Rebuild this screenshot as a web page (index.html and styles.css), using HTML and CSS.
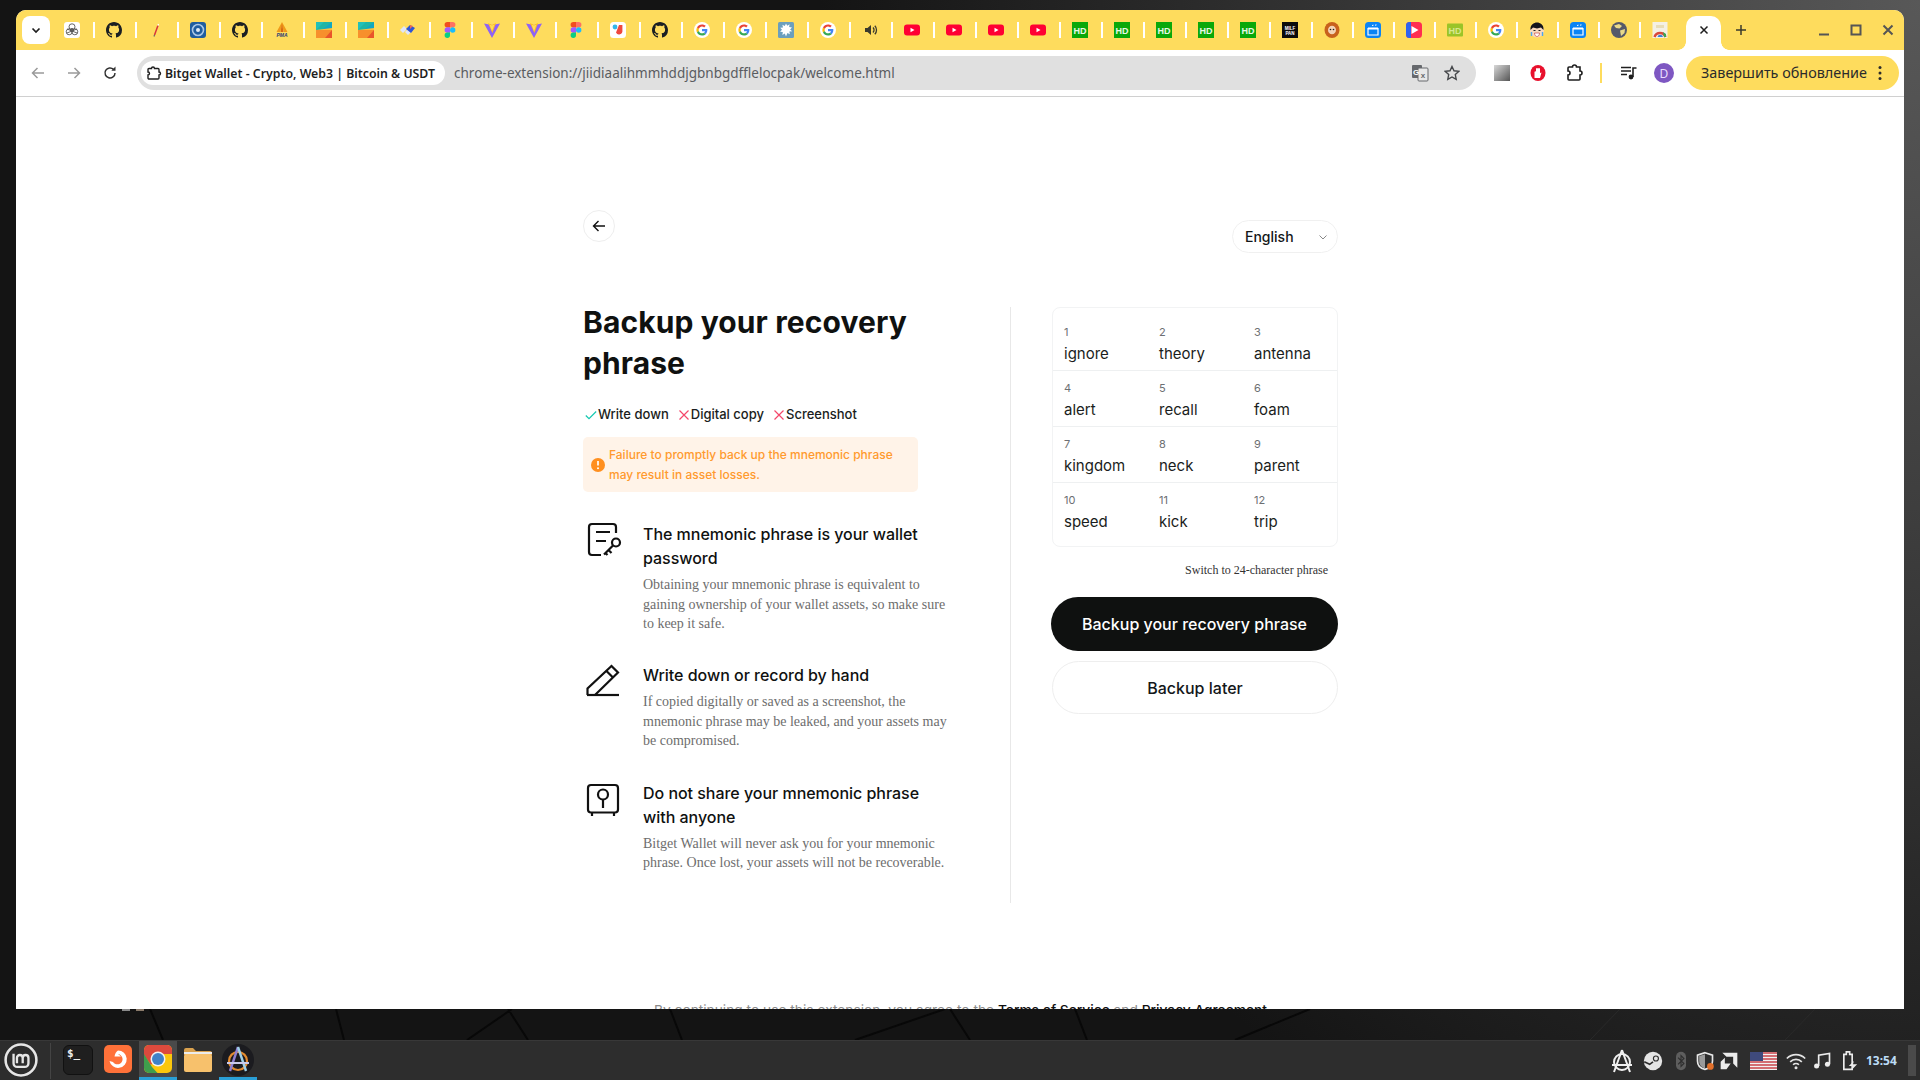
FILE: index.html
```html
<!DOCTYPE html>
<html lang="en">
<head>
<meta charset="utf-8">
<title>Bitget Wallet</title>
<link rel="stylesheet" href="styles.css">
</head>
<body>
<svg class="defs" xmlns="http://www.w3.org/2000/svg">
  <symbol id="gpt" viewBox="0 0 16 16"><rect width="16" height="16" rx="3" fill="#fff"/><g fill="none" stroke="#555" stroke-width=".9"><circle cx="8" cy="4.800" r="3"/><circle cx="5.200" cy="9.800" r="3"/><circle cx="10.800" cy="9.800" r="3"/><circle cx="8" cy="8" r="1.600"/><path d="M3 7l10 4M13 7L3 11"/></g></symbol>
  <symbol id="gh" viewBox="0 0 16 16"><path fill="#1b1f23" d="M8 0C3.58 0 0 3.58 0 8c0 3.54 2.29 6.53 5.47 7.59.4.07.55-.17.55-.38 0-.19-.01-.82-.01-1.49-2.01.37-2.53-.49-2.69-.94-.09-.23-.48-.94-.82-1.13-.28-.15-.68-.52-.01-.53.63-.01 1.08.58 1.23.82.72 1.21 1.87.87 2.33.66.07-.52.28-.87.51-1.07-1.78-.2-3.64-.89-3.64-3.95 0-.87.31-1.59.82-2.15-.08-.2-.36-1.02.08-2.12 0 0 .67-.21 2.2.82.64-.18 1.32-.27 2-.27.68 0 1.36.09 2 .27 1.53-1.04 2.2-.82 2.2-.82.44 1.1.16 1.92.08 2.12.51.56.82 1.27.82 2.15 0 3.07-1.87 3.75-3.65 3.95.29.25.54.73.54 1.48 0 1.07-.01 1.93-.01 2.2 0 .21.15.46.55.38A8.013 8.013 0 0016 8c0-4.42-3.58-8-8-8z"/></symbol>
  <symbol id="pen" viewBox="0 0 16 16"><path d="M10 3.500 6.500 13" stroke="#d8353a" stroke-width="1.500"/><path d="M10 3.500 10.500 2" stroke="#fff" stroke-width="1.300"/><path d="M6.500 13 6 14.500" stroke="#666" stroke-width="1.200"/></symbol>
  <symbol id="disc" viewBox="0 0 16 16"><rect width="16" height="16" rx="3" fill="#1f5d9f"/><circle cx="8" cy="8" r="5.500" fill="none" stroke="#a9c7e6" stroke-width="1.600"/><circle cx="8" cy="8" r="2" fill="#dfeaf5"/></symbol>
  <symbol id="pma" viewBox="0 0 16 16"><path d="M8 0 2.500 10h3.500L8 4l2 6h3.500z" fill="#f09a1a"/><path d="M8 1.500 6.500 10h3z" fill="#d96a12"/><text x="8" y="15" class="fav-pma">PMA</text></symbol>
  <symbol id="kite" viewBox="0 0 16 16"><rect width="16" height="8" fill="#1fb5a5"/><path d="M0 8h16v8H0z" fill="#f7902c"/><path d="M0 0h8L0 8z" fill="#22c0b8"/><path d="M16 0v8H6z" fill="#12a6c4"/><path d="M16 8v8h-7z" fill="#e9552a"/><path d="M0 8l16-2v2z" fill="#fbbf3a"/></symbol>
  <symbol id="rhomb" viewBox="0 0 16 16"><path d="M0 8l4-4 3 3-4 4z" fill="#dfe6fb"/><path d="M5 10l3-3 3 3-3 3z" fill="#dfe6fb"/><path d="M6 7l4-4 5 3-4 5z" fill="#2f55d4"/><path d="M10 3l3 1-3 3z" fill="#ef6a53"/></symbol>
  <symbol id="figma" viewBox="0 0 16 16"><g transform="translate(2.600 0)"><path d="M5.400 0H2.700a2.700 2.700 0 0 0 0 5.400h2.700z" fill="#f24e1e"/><path d="M5.400 0h2.700a2.700 2.700 0 0 1 0 5.400H5.400z" fill="#ff7262"/><path d="M5.400 5.300H2.700a2.700 2.700 0 0 0 0 5.400h2.700z" fill="#a259ff"/><circle cx="8.100" cy="8" r="2.700" fill="#1abcfe"/><path d="M2.700 10.600h2.700v2.700a2.700 2.700 0 1 1-2.700-2.700z" fill="#0acf83"/></g></symbol>
  <symbol id="vite" viewBox="0 0 16 16"><path d="M0 1.500 8 16l8-14.500-8 1.600z" fill="#8f63f5"/><path d="M4 1 8 3l4-2-3.600 10z" fill="#ffc21a"/><path d="M5.600 2.800 8 3.400l2.400-.6L8 9z" fill="#fedc5d"/></symbol>
  <symbol id="app" viewBox="0 0 16 16"><rect width="16" height="16" rx="3.500" fill="#fff"/><circle cx="5" cy="5" r="2.400" fill="#35b6e8"/><path d="M9 3h3.400v5.600a3.400 3.400 0 0 1-6.400 2z" fill="#f0483e"/></symbol>
  <symbol id="goog" viewBox="0 0 16 16"><circle cx="8" cy="8" r="8" fill="#fff"/><g transform="translate(2.400 2.400) scale(.233)"><path fill="#EA4335" d="M24 9.500c3.540 0 6.710 1.220 9.210 3.600l6.850-6.850C35.900 2.380 30.470 0 24 0 14.620 0 6.510 5.380 2.560 13.220l7.980 6.190C12.430 13.720 17.740 9.500 24 9.500z"/><path fill="#4285F4" d="M46.980 24.550c0-1.570-.15-3.090-.38-4.550H24v9.020h12.940c-.58 2.960-2.260 5.480-4.780 7.180l7.730 6c4.510-4.180 7.090-10.360 7.090-17.650z"/><path fill="#FBBC05" d="M10.530 28.590c-.48-1.450-.76-2.990-.76-4.590s.27-3.140.76-4.590l-7.980-6.190C.92 16.460 0 20.120 0 24c0 3.880.92 7.540 2.560 10.780l7.970-6.190z"/><path fill="#34A853" d="M24 48c6.480 0 11.930-2.130 16.030-5.810l-7.730-6c-2.150 1.450-4.920 2.300-8.300 2.300-6.260 0-11.570-4.220-13.470-9.910l-7.980 6.190C6.510 42.620 14.620 48 24 48z"/></g></symbol>
  <symbol id="splat" viewBox="0 0 16 16"><rect width="16" height="16" rx="1.500" fill="#6b9fbd"/><path d="M8 1.500l1.200 2.300 2.400-1.500-.5 2.800 2.900.3-1.900 2 2.100 1.800-2.900.4.600 2.700-2.500-1.200L8 14.500l-1.200-3-2.400 1.500.4-3-2.700-.3 1.900-2L2.200 5.800l2.800-.4-.6-2.700 2.400 1.300z" fill="#fff"/></symbol>
  <symbol id="speak" viewBox="0 0 16 16"><path d="M3 6h2.500L9 3v10L5.500 10H3z" fill="#3b3a2c"/><path d="M11 5.500a3.500 3.500 0 0 1 0 5M12.800 3.800a6 6 0 0 1 0 8.400" fill="none" stroke="#3b3a2c" stroke-width="1.300"/></symbol>
  <symbol id="yt" viewBox="0 0 16 16"><rect y="2.500" width="16" height="11" rx="3" fill="#ff0033"/><path d="M6.500 5.800 10.500 8l-4 2.200z" fill="#fff"/></symbol>
  <symbol id="hd" viewBox="0 0 16 16"><rect width="16" height="16" fill="#0aa80a"/><text x="8" y="11.800" class="fav-hd">HD</text></symbol>
  <symbol id="hdl" viewBox="0 0 16 16"><rect y="1.500" width="16" height="13" rx="1" fill="#9ac428"/><text x="8" y="11.800" class="fav-hdl">HD</text></symbol>
  <symbol id="milf" viewBox="0 0 16 16"><rect width="16" height="16" fill="#0c0c0c"/><text x="8" y="7.500" class="fav-milf">MILF</text><text x="8" y="12.500" class="fav-milf">PAN</text></symbol>
  <symbol id="kenny" viewBox="0 0 16 16"><ellipse cx="8" cy="8" rx="7.500" ry="8" fill="#c8611c"/><ellipse cx="8" cy="8" rx="4" ry="4.300" fill="#f3d3b5"/><circle cx="6.500" cy="7.500" r=".8" fill="#222"/><circle cx="9.500" cy="7.500" r=".8" fill="#222"/></symbol>
  <symbol id="clap" viewBox="0 0 16 16"><rect width="16" height="16" rx="3.500" fill="#0a84f5"/><path d="M3 6.500h10V13H3z" fill="none" stroke="#fff" stroke-width="1.200"/><path d="M3 6.500h10" stroke="#fff" stroke-width="1.800"/><path d="M7 3.500l1.500-.3M10 3.200l1.500-.3" stroke="#fff" stroke-width="1"/></symbol>
  <symbol id="play" viewBox="0 0 16 16"><rect width="16" height="16" rx="3.500" fill="#ff2d50"/><path d="M0 3.500A3.500 3.500 0 0 1 3.500 0H5v16H3.500A3.500 3.500 0 0 1 0 12.500z" fill="#2f63f0"/><path d="M5.500 4l7 4-7 4z" fill="#fff"/></symbol>
  <symbol id="boy" viewBox="0 0 16 16"><ellipse cx="8" cy="9" rx="7" ry="6.500" fill="#f8d9bd"/><path d="M1.500 8C1 2.500 5 .5 8 .5s7 2 6.500 7.500L12 5.500 8 6.500 4 5.500z" fill="#14141c"/><path d="M4.500 8.500h2M9.500 8.500h2" stroke="#222" stroke-width="1.100"/><path d="M5.500 11h5c0 2.500-1.500 3.500-2.500 3.500S5.500 13.500 5.500 11z" fill="#fff" stroke="#b33" stroke-width=".6"/><path d="M2.500 10v4M13.500 10v4" stroke="#4da6ee" stroke-width="1.400"/></symbol>
  <symbol id="globe" viewBox="0 0 16 16"><circle cx="8" cy="8" r="8" fill="#55596a"/><path d="M3 3.500 8 2l3 2-2.500 2.500L5 6zM9 8.500l5-1.500-.5 4L10 14z" fill="#e9d98a"/></symbol>
  <symbol id="chromeimg" viewBox="0 0 16 16"><rect x=".5" width="15" height="16" fill="#f4f0e6"/><path d="M2.500 15a5.800 5.800 0 0 1 11 0" fill="none" stroke="#d9483b" stroke-width="2.500"/><path d="M5.500 15a2.800 2.800 0 0 1 5.500 0" fill="#3b7fd9"/><path d="M4 3h8v3H4z" fill="#e8ddb8"/><path d="M11 10l3 2v3h-2z" fill="#3aa655"/></symbol>
  <symbol id="arrow" viewBox="0 0 16 16"><path d="M14 8H2.500M7.500 3 2.500 8l5 5" fill="none" stroke="currentColor" stroke-width="1.500"/></symbol>
</svg>

<div class="desktop">
  <div class="window">
    <div class="tabstrip">
      <div class="tabsearch"><svg viewBox="0 0 12 12"><path d="M2.500 4.500 6 8l3.500-3.500" fill="none" stroke="#1f1f1f" stroke-width="1.700"/></svg></div>
      <div class="tabs">
        <div class="tab"><svg class="fav"><use href="#gpt"/></svg></div>
        <div class="tab"><svg class="fav"><use href="#gh"/></svg></div>
        <div class="tab"><svg class="fav"><use href="#pen"/></svg></div>
        <div class="tab"><svg class="fav"><use href="#disc"/></svg></div>
        <div class="tab"><svg class="fav"><use href="#gh"/></svg></div>
        <div class="tab"><svg class="fav"><use href="#pma"/></svg></div>
        <div class="tab"><svg class="fav"><use href="#kite"/></svg></div>
        <div class="tab"><svg class="fav"><use href="#kite"/></svg></div>
        <div class="tab"><svg class="fav"><use href="#rhomb"/></svg></div>
        <div class="tab"><svg class="fav"><use href="#figma"/></svg></div>
        <div class="tab"><svg class="fav"><use href="#vite"/></svg></div>
        <div class="tab"><svg class="fav"><use href="#vite"/></svg></div>
        <div class="tab"><svg class="fav"><use href="#figma"/></svg></div>
        <div class="tab"><svg class="fav"><use href="#app"/></svg></div>
        <div class="tab"><svg class="fav"><use href="#gh"/></svg></div>
        <div class="tab"><svg class="fav"><use href="#goog"/></svg></div>
        <div class="tab"><svg class="fav"><use href="#goog"/></svg></div>
        <div class="tab"><svg class="fav"><use href="#splat"/></svg></div>
        <div class="tab"><svg class="fav"><use href="#goog"/></svg></div>
        <div class="tab"><svg class="fav"><use href="#speak"/></svg></div>
        <div class="tab"><svg class="fav"><use href="#yt"/></svg></div>
        <div class="tab"><svg class="fav"><use href="#yt"/></svg></div>
        <div class="tab"><svg class="fav"><use href="#yt"/></svg></div>
        <div class="tab"><svg class="fav"><use href="#yt"/></svg></div>
        <div class="tab"><svg class="fav"><use href="#hd"/></svg></div>
        <div class="tab"><svg class="fav"><use href="#hd"/></svg></div>
        <div class="tab"><svg class="fav"><use href="#hd"/></svg></div>
        <div class="tab"><svg class="fav"><use href="#hd"/></svg></div>
        <div class="tab"><svg class="fav"><use href="#hd"/></svg></div>
        <div class="tab"><svg class="fav"><use href="#milf"/></svg></div>
        <div class="tab tab-n"><svg class="fav"><use href="#kenny"/></svg></div>
        <div class="tab tab-n"><svg class="fav"><use href="#clap"/></svg></div>
        <div class="tab tab-n"><svg class="fav"><use href="#play"/></svg></div>
        <div class="tab tab-n"><svg class="fav"><use href="#hdl"/></svg></div>
        <div class="tab tab-n"><svg class="fav"><use href="#goog"/></svg></div>
        <div class="tab tab-n"><svg class="fav"><use href="#boy"/></svg></div>
        <div class="tab tab-n"><svg class="fav"><use href="#clap"/></svg></div>
        <div class="tab tab-n"><svg class="fav"><use href="#globe"/></svg></div>
        <div class="tab tab-n tab-last"><svg class="fav"><use href="#chromeimg"/></svg></div>
      </div>
      <div class="tab-active"><svg viewBox="0 0 12 12"><path d="M2.500 2.500l7 7M9.500 2.500l-7 7" stroke="#1f1f1f" stroke-width="1.500"/></svg></div>
      <div class="newtab"><svg viewBox="0 0 12 12"><path d="M6 1v10M1 6h10" stroke="#3a3a2c" stroke-width="1.500"/></svg></div>
      <div class="winbtns">
        <svg viewBox="0 0 12 12"><path d="M1 10.500h10" stroke="#555" stroke-width="2"/></svg>
        <svg viewBox="0 0 12 12"><rect x="1.500" y="1.500" width="9" height="9" fill="none" stroke="#555" stroke-width="2"/></svg>
        <svg viewBox="0 0 12 12"><path d="M1.500 1.500l9 9M10.500 1.500l-9 9" stroke="#555" stroke-width="2"/></svg>
      </div>
    </div>

    <div class="toolbar">
      <div class="navbtns">
        <svg class="nav-off"><use href="#arrow"/></svg>
        <svg class="nav-off nav-flip"><use href="#arrow"/></svg>
        <svg class="nav-on" viewBox="0 0 16 16"><path d="M13 8a5 5 0 1 1-1.500-3.600" fill="none" stroke="currentColor" stroke-width="1.500"/><path d="M13.500 1.500v4.200H9.300z" fill="currentColor"/></svg>
      </div>
      <div class="omnibox">
        <div class="chip">
          <svg class="chip-icon" viewBox="0 0 16 16"><path d="M3 3.500h2.500a1.500 1.500 0 0 1 3 0H12a1 1 0 0 1 1 1V7a1.500 1.500 0 0 1 0 3v3a1 1 0 0 1-1 1H3a1 1 0 0 1-1-1v-3a1.500 1.500 0 0 0 0-3V4.500a1 1 0 0 1 1-1z" fill="none" stroke="#1f1f1f" stroke-width="1.400"/></svg>
          <span class="chip-text">Bitget Wallet - Crypto, Web3 | Bitcoin &amp; USDT</span>
        </div>
        <span class="url">chrome-extension://jiidiaalihmmhddjgbnbgdfflelocpak/welcome.html</span>
        <svg class="omni-tr" viewBox="0 0 18 18"><rect x="1" y="1" width="10" height="13" rx="1" fill="#66686c"/><rect x="7" y="4" width="10" height="13" rx="1" fill="#e8e8e8" stroke="#66686c"/><text x="5" y="10.500" class="tr-g">G</text><text x="12" y="14" class="tr-x">x</text></svg>
        <svg class="omni-star" viewBox="0 0 16 16"><path d="M8 1.500l2 4.300 4.700.6-3.400 3.200.9 4.700L8 12l-4.200 2.300.9-4.700L1.300 6.400 6 5.800z" fill="none" stroke="#45474a" stroke-width="1.400"/></svg>
      </div>
      <div class="tools">
        <div class="ext-grey"></div>
        <svg class="ext-opera" viewBox="0 0 16 16"><ellipse cx="8" cy="8" rx="7.500" ry="8" fill="#e8112d"/><path d="M4.500 13V7a1 1 0 0 1 1.500-.5V4a1 1 0 0 1 2 0 1 1 0 0 1 2 0v4l1.500-.5L10 13z" fill="#fff"/></svg>
        <svg class="ext-puzzle" viewBox="0 0 18 18"><path d="M4 3h3.500a2 2 0 0 1 4 0H15v4a2 2 0 0 1 0 4v4a1 1 0 0 1-1 1H4a1 1 0 0 1-1-1v-4a2 2 0 0 0 0-4V4a1 1 0 0 1 1-1z" fill="none" stroke="#1f1f1f" stroke-width="1.600"/></svg>
        <div class="tool-sep"></div>
        <svg class="ext-media" viewBox="0 0 18 18"><path d="M1 3.500h10M1 7h10M1 10.500h6" stroke="#1f1f1f" stroke-width="1.500"/><circle cx="11" cy="13" r="2.400" fill="#1f1f1f"/><path d="M13 13V4h3.500" fill="none" stroke="#1f1f1f" stroke-width="1.600"/></svg>
        <div class="avatar">D</div>
        <div class="update"><span>Завершить обновление</span><svg viewBox="0 0 4 16"><circle cx="2" cy="2.500" r="1.500"/><circle cx="2" cy="8" r="1.500"/><circle cx="2" cy="13.500" r="1.500"/></svg></div>
      </div>
    </div>

    <main class="page">
      <div class="shell">
        <div class="topbar">
          <div class="back"><svg viewBox="0 0 16 16"><path d="M14 8H2.500M7.500 3 2.500 8l5 5" fill="none" stroke="#111" stroke-width="1.400"/></svg></div>
          <div class="lang"><span>English</span><svg viewBox="0 0 10 10"><path d="M1.500 3.500 5 7l3.500-3.500" fill="none" stroke="#888" stroke-width="1"/></svg></div>
        </div>
        <div class="columns">
          <section class="left">
            <h1 class="title">Backup your recovery phrase</h1>
            <div class="checks">
              <span class="check"><svg viewBox="0 0 12 12"><path d="M.8 6.500 4 9.700 11.200 2.500" fill="none" stroke="#14c8b0" stroke-width="1.200"/></svg>Write down</span>
              <span class="check"><svg viewBox="0 0 12 12"><path d="M1.500 1.500l9 9M10.500 1.500l-9 9" stroke="#f4476b" stroke-width="1.200"/></svg>Digital copy</span>
              <span class="check"><svg viewBox="0 0 12 12"><path d="M1.500 1.500l9 9M10.500 1.500l-9 9" stroke="#f4476b" stroke-width="1.200"/></svg>Screenshot</span>
            </div>
            <div class="notice">
              <svg viewBox="0 0 14 14"><circle cx="7" cy="7" r="7" fill="#ff8f1f"/><path d="M7 3v4.600" stroke="#fff" stroke-width="1.700"/><circle cx="7" cy="10.300" r="1" fill="#fff"/></svg>
              <p>Failure to promptly back up the mnemonic phrase may result in asset losses.</p>
            </div>
            <div class="items">
              <div class="item">
                <svg class="item-icon" viewBox="0 0 40 40"><g fill="none" stroke="#111" stroke-width="2.200"><path d="M33 11V5a3 3 0 0 0-3-3H9a3 3 0 0 0-3 3v25a3 3 0 0 0 3 3h9"/><path d="M13 10h14M13 19h10"/><circle cx="33" cy="20.500" r="4"/><path d="M30 23.500 21 32.500M25.500 28l3 3M22.500 31l2 2"/></g></svg>
                <div class="item-body">
                  <h3>The mnemonic phrase is your wallet password</h3>
                  <p>Obtaining your mnemonic phrase is equivalent to gaining ownership of your wallet assets, so make sure to keep it safe.</p>
                </div>
              </div>
              <div class="item">
                <svg class="item-icon" viewBox="0 0 40 40"><g fill="none" stroke="#111" stroke-width="2.200"><path d="M4.500 32v-6.500L28.500 3 35 9.500 12 32"/><path d="M23.500 8 30 14.500"/><path d="M4 32h32"/></g></svg>
                <div class="item-body">
                  <h3>Write down or record by hand</h3>
                  <p>If copied digitally or saved as a screenshot, the mnemonic phrase may be leaked, and your assets may be compromised.</p>
                </div>
              </div>
              <div class="item">
                <svg class="item-icon" viewBox="0 0 40 40"><g fill="none" stroke="#111" stroke-width="2.200"><rect x="5" y="4" width="30" height="27.500" rx="3"/><circle cx="20" cy="13.500" r="5"/><path d="M20 18.500V27M9 32v3M31 32v3"/></g></svg>
                <div class="item-body">
                  <h3>Do not share your mnemonic phrase with anyone</h3>
                  <p>Bitget Wallet will never ask you for your mnemonic phrase. Once lost, your assets will not be recoverable.</p>
                </div>
              </div>
            </div>
          </section>
          <section class="right">
            <div class="words">
              <div class="word"><small>1</small><span>ignore</span></div>
              <div class="word"><small>2</small><span>theory</span></div>
              <div class="word"><small>3</small><span>antenna</span></div>
              <div class="word"><small>4</small><span>alert</span></div>
              <div class="word"><small>5</small><span>recall</span></div>
              <div class="word"><small>6</small><span>foam</span></div>
              <div class="word"><small>7</small><span>kingdom</span></div>
              <div class="word"><small>8</small><span>neck</span></div>
              <div class="word"><small>9</small><span>parent</span></div>
              <div class="word word-end"><small>10</small><span>speed</span></div>
              <div class="word word-end"><small>11</small><span>kick</span></div>
              <div class="word word-end"><small>12</small><span>trip</span></div>
            </div>
            <div class="switch">Switch to 24-character phrase</div>
            <div class="btn btn-dark">Backup your recovery phrase</div>
            <div class="btn btn-light">Backup later</div>
          </section>
        </div>
        <p class="terms">By continuing to use this extension, you agree to the <b>Terms of Service</b> and <b>Privacy Agreement</b></p>
      </div>
    </main>
  </div>

  <svg class="gap" viewBox="0 0 1920 31">
    <g fill="none" stroke="#080808" stroke-width="2">
      <path d="M150 0l13 31M336 0l8 31M512 0l-45 31M508 0l20 31M670 0l12 31M945 0l-90 31M950 0l20 31M1075 0l12 31M1310 0l-75 31"/>
    </g>
    <g fill="none" stroke="#2a2a2a" stroke-width="1">
      <path d="M1620 0l-30 31M1815 0l-30 31"/>
    </g>
    <rect x="122" y="0" width="8" height="2" fill="#8a8a8a"/>
    <rect x="136" y="0" width="8" height="2" fill="#8a7a6a"/>
  </svg>

  <footer class="taskbar">
    <svg class="mint" viewBox="0 0 32 32"><circle cx="16" cy="16" r="14.500" fill="none" stroke="#e6e6e6" stroke-width="2.400"/><path d="M9 10v9a3.500 3.500 0 0 0 3.500 3.500h7A3.500 3.500 0 0 0 23 19v-5a2.700 2.700 0 0 0-5.400 0v5M17.600 14a2.700 2.700 0 0 0-5.400 0v5" fill="none" stroke="#e6e6e6" stroke-width="2.200"/></svg>
    <div class="bar-sep"></div>
    <div class="launch">
      <div class="app app-term"><span>$_</span></div>
      <div class="app"><svg viewBox="0 0 28 28"><rect width="28" height="28" rx="5" fill="#ff7139"/><path d="M14 5.500a8.700 8.700 0 1 1-8.500 10.500l3.500 1a5.200 5.200 0 1 0 5-8L17 11.500h-6.500c.5-3 1.800-5 3.500-6z" fill="#fff"/></svg></div>
      <div class="app app-on app-chrome"><svg viewBox="0 0 28 28"><rect width="28" height="28" rx="5" fill="#fbc70c"/><path d="M0 5a5 5 0 0 1 5-5h18a5 5 0 0 1 5 5v4H14L7 20 0 10z" fill="#dc4a3d"/><path d="M0 9l8 13 5.500 6H5a5 5 0 0 1-5-5z" fill="#3f9e4c"/><circle cx="14" cy="14" r="7.500" fill="#f2f2f2"/><circle cx="14" cy="14" r="6" fill="#3f82c8"/></svg></div>
      <div class="app"><svg viewBox="0 0 28 26"><path d="M0 4a2 2 0 0 1 2-2h7l3 3h14a2 2 0 0 1 2 2v2H0z" fill="#d9a14e"/><rect y="6" width="28" height="2" fill="#ececec"/><rect y="8" width="28" height="18" rx="2" fill="#f7c16c"/></svg></div>
      <div class="app app-on app-an"><svg viewBox="0 0 32 32"><circle cx="16" cy="16" r="16" fill="#1b1b1f"/><circle cx="16" cy="17" r="9" fill="none" stroke="#e38b2e" stroke-width="2.200"/><path d="M16 3 8 27" fill="none" stroke="#8f7fd0" stroke-width="2.400"/><path d="M16 3l8 24" fill="none" stroke="#9fd0e8" stroke-width="2.400"/><path d="M5 19h22" fill="none" stroke="#c9c9e8" stroke-width="2"/></svg></div>
    </div>
    <div class="tray">
      <svg class="tray-i tray-an" viewBox="0 0 24 24"><circle cx="12" cy="13" r="8" fill="none" stroke="#f0f0f0" stroke-width="2"/><path d="M12 1 4 23M12 1l8 22M2 16h20" fill="none" stroke="#f0f0f0" stroke-width="2"/></svg>
      <svg class="tray-i m9" viewBox="0 0 24 24"><circle cx="12" cy="12" r="11" fill="#e4e4e4"/><circle cx="15.500" cy="9" r="3" fill="none" stroke="#2d2d2d" stroke-width="1.400"/><path d="M1.500 13l6.500 3 4-3" fill="none" stroke="#2d2d2d" stroke-width="2"/></svg>
      <svg class="tray-i m8" viewBox="0 0 24 24"><rect x="6" y="1" width="12" height="22" rx="6" fill="#5e5e5e"/><path d="M8.500 8l7 7-3.500 3.500v-13L15.500 9l-7 7" fill="none" stroke="#2d2d2d" stroke-width="1.300"/></svg>
      <svg class="tray-i m4" viewBox="0 0 24 24"><path d="M12 2l9 3v7c0 6-4 9-9 10-5-1-9-4-9-10V5z" fill="none" stroke="#e8e8e8" stroke-width="2"/><path d="M12 4v17c-4-1-7-4-7-9V6z" fill="#9a9a9a"/><circle cx="18.500" cy="18.500" r="4" fill="#e2702a"/></svg>
      <svg class="tray-i m4" viewBox="0 0 24 24"><path d="M4 2h18v18l-5-5V7H9zM2 22v-9l5-5v7h7l-5 7z" fill="#ececec"/></svg>
      <svg class="flag" viewBox="0 0 27 18"><rect width="27" height="18" fill="#f2f2f2"/><path d="M0 1h27M0 4h27M0 7h27M0 10h27M0 13h27M0 16h27" stroke="#c9434a" stroke-width="1.400"/><rect width="13" height="9" fill="#3f4a7c"/></svg>
      <svg class="tray-i m9" viewBox="0 0 24 24"><path d="M1 9a15.500 15.500 0 0 1 22 0M5 13a10 10 0 0 1 14 0M8.500 16.500a5 5 0 0 1 7 0" fill="none" stroke="#e4e4e4" stroke-width="2"/><circle cx="12" cy="20" r="1.800" fill="#e4e4e4"/></svg>
      <svg class="tray-i m6" viewBox="0 0 24 24"><path d="M8 18V5l13-2v13" fill="none" stroke="#ececec" stroke-width="2"/><circle cx="5.500" cy="18" r="3" fill="#ececec"/><circle cx="18.500" cy="16" r="3" fill="#ececec"/></svg>
      <svg class="tray-i m6" viewBox="0 0 24 24"><path d="M10 1h4v3h3v18H7V4h3z" fill="none" stroke="#ececec" stroke-width="2"/><path d="M19 12l-6 6h5l-2 5 7-7h-5z" fill="#ececec"/></svg>
      <span class="clock">13:54</span>
      <div class="showdesk"></div>
    </div>
  </footer>
</div>
</body>
</html>
```

FILE: styles.css
```css
* { box-sizing: border-box; }
html, body { margin: 0; height: 100%; }
body { overflow: hidden; font-family: "Inter", "Liberation Sans", sans-serif; }
.defs { display: none; }
.fav-hd, .fav-hdl { font: 700 9px "Liberation Sans Narrow", "Liberation Sans", sans-serif; text-anchor: middle; }
.fav-hd { fill: #e8f8e8; }
.fav-hdl { fill: #d7e88e; }
.fav-milf { font: 700 4.500px "Liberation Sans", sans-serif; fill: #fff; text-anchor: middle; }
.fav-pma { font: italic 700 5px "Liberation Sans", sans-serif; fill: #2b3a78; text-anchor: middle; }
.tr-g { font: 700 8px "Liberation Sans", sans-serif; fill: #fff; text-anchor: middle; }
.tr-x { font: 700 8px "Liberation Sans", sans-serif; fill: #66686c; text-anchor: middle; }

.desktop {
  width: 1920px; height: 1080px; display: flex; flex-direction: column;
  background: radial-gradient(ellipse 1100px 1300px at 100% 0, #585858 0, #3a3a3a 45%, #282828 70%, #141414 100%), #111;
}
.window {
  margin: 10px 16px 0; height: 999px; display: flex; flex-direction: column;
  background: #fff; border-radius: 10px 10px 0 0; overflow: hidden; flex: none;
}
.gap { display: block; width: 1920px; height: 31px; flex: none; }

/* tab strip */
.tabstrip { height: 40px; background: #fedc5d; display: flex; flex: none; padding: 6px 0 0 6px; }
.tabsearch { width: 28px; height: 28px; background: #fff; border-radius: 8px; display: flex; align-items: center; justify-content: center; margin-right: 3px; flex: none; }
.tabsearch svg { width: 12px; height: 12px; }
.tabs { display: flex; height: 16px; margin-top: 6px; flex: none; }
.tab { width: 42px; height: 16px; padding-left: 11px; border-right: 2px solid #fff; flex: none; }
.tab-n { width: 41px; }
.tab-last { border-right: 0; }
.fav { width: 16px; height: 16px; display: block; }
.tab-active {
  width: 35px; height: 34px; background: #fff; border-radius: 10px 10px 0 0; margin-left: 4px;
  display: flex; align-items: center; justify-content: center; padding-bottom: 6px; flex: none; position: relative;
}
.tab-active::before, .tab-active::after { content: ""; position: absolute; bottom: 0; width: 8px; height: 8px; }
.tab-active::before { left: -8px; background: radial-gradient(circle at 0 0, #fedc5d 7.500px, #fff 8px); }
.tab-active::after { right: -8px; background: radial-gradient(circle at 100% 0, #fedc5d 7.500px, #fff 8px); }
.tab-active svg { width: 12px; height: 12px; }
.newtab { width: 40px; height: 28px; display: flex; align-items: center; justify-content: center; flex: none; }
.newtab svg { width: 12px; height: 12px; }
.winbtns { margin-left: auto; display: flex; gap: 20px; padding: 8px 10px 0 0; }
.winbtns svg { width: 12px; height: 12px; }

/* toolbar */
.toolbar { height: 47px; flex: none; display: flex; align-items: flex-start; padding-top: 6px; border-bottom: 1px solid #d0d0d0; background: #fff; }
.navbtns { width: 121px; height: 34px; display: flex; align-items: center; gap: 20px; padding-left: 14px; flex: none; }
.navbtns svg { width: 16px; height: 16px; flex: none; }
.nav-off { color: #9a9a9a; }
.nav-on { color: #333; }
.nav-flip { transform: scaleX(-1); }
.omnibox { width: 1339px; height: 34px; background: #e0e0e0; border-radius: 17px; display: flex; align-items: center; padding: 0 16px 0 4px; flex: none; }
.chip { height: 24px; width: 304px; background: #fff; border-radius: 12px; display: flex; align-items: center; padding-left: 5px; flex: none; }
.chip-icon { width: 16px; height: 16px; flex: none; margin-right: 3px; }
.chip-text { font: 600 12.300px "Noto Sans", sans-serif; color: #1f1f1f; white-space: nowrap; }
.url { font: 400 13.500px "Noto Sans", sans-serif; color: #5a5c60; margin-left: 9px; white-space: nowrap; }
.omni-tr { width: 18px; height: 18px; margin-left: auto; flex: none; }
.omni-star { width: 16px; height: 16px; margin-left: 15px; flex: none; }
.tools { display: flex; align-items: center; height: 34px; flex: 1; padding-left: 18px; }
.ext-grey { width: 16px; height: 16px; background: linear-gradient(135deg, #d8d8d8, #555); flex: none; }
.ext-opera { width: 16px; height: 16px; margin-left: 20px; flex: none; }
.ext-puzzle { width: 18px; height: 18px; margin-left: 19px; flex: none; }
.tool-sep { width: 2px; height: 20px; background: #fedc5d; margin-left: 17px; flex: none; }
.ext-media { width: 18px; height: 18px; margin-left: 18px; flex: none; }
.avatar { width: 20px; height: 20px; border-radius: 50%; background: #7e57c2; color: #eadcff; font: 400 12px "Noto Sans", sans-serif; display: flex; align-items: center; justify-content: center; margin-left: 16px; flex: none; }
.update { width: 213px; height: 34px; background: #fedc5d; border-radius: 17px; margin-left: 12px; display: flex; align-items: center; padding-left: 15px; flex: none; }
.update span { font: 400 14.400px "Noto Sans", sans-serif; color: #2b2b2b; white-space: nowrap; width: 177px; padding-bottom: 2px; }
.update svg { width: 4px; height: 16px; fill: #2b2b2b; }

/* page */
.page { flex: 1; min-height: 0; overflow: hidden; background: #fff; display: flex; justify-content: center; }
.shell { width: 756px; padding-top: 113px; padding-left: 1px; }
.topbar { height: 97px; display: flex; justify-content: space-between; align-items: flex-start; }
.back { width: 32px; height: 32px; border: 1px solid #eeeeee; border-radius: 50%; display: flex; align-items: center; justify-content: center; }
.back svg { width: 16px; height: 16px; }
.lang { width: 106px; height: 33px; margin-top: 10px; border: 1px solid #f0f0f0; border-radius: 17px; display: flex; align-items: center; justify-content: space-between; padding: 0 9px 0 12px; font-size: 14px; font-weight: 500; color: #14171a; }
.lang svg { width: 10px; height: 10px; }

.columns { display: flex; min-height: 596px; }
.left { width: 428px; border-right: 1px solid #e8e8e8; padding-right: 58px; flex: none; }
.title { margin: -5px 0 0; font-size: 30px; line-height: 41px; font-weight: 700; color: #0f1110; letter-spacing: 0.1px; }
.checks { display: flex; gap: 9px; margin-top: 20px; padding-left: 2px; height: 20px; }
.check { display: flex; align-items: center; gap: 1px; font-size: 13px; line-height: 20px; font-weight: 500; color: #1a1d20; }
.check svg { width: 12px; height: 12px; flex: none; margin-top: 2px; }
.notice { width: 335px; height: 55px; margin-top: 13px; background: #fff3e8; border-radius: 5px; display: flex; align-items: center; padding-left: 8px; gap: 4px; }
.notice svg { width: 14px; height: 14px; flex: none; }
.notice p { margin: 0; font-size: 12px; line-height: 20px; font-weight: 500; color: #ff9a2e; width: 300px; }
.items { margin-top: 30px; display: flex; flex-direction: column; gap: 29.500px; }
.item { display: flex; }
.item-icon { width: 40px; height: 40px; flex: none; margin-right: 20px; }
.item-body h3 { margin: 0; font-size: 16px; line-height: 24px; font-weight: 500; color: #0f1110; letter-spacing: -0.03px; }
.item-body p { margin: 5px 0 0; font: 14px/19.600px "Liberation Serif", serif; color: #6d6d6d; }

.right { width: 287px; margin-left: 40px; flex: none; }
.words { width: 286px; height: 240px; margin-left: 1px; border: 1px solid #f2f3f4; border-radius: 8px; padding: 7px 0; display: grid; grid-template-columns: 95px 95px 94px; grid-auto-rows: 56px; }
.word { padding: 9px 0 0 11px; border-bottom: 1px solid #eef0f1; display: flex; flex-direction: column; }
.word-end { border-bottom: 0; }
.word small { font-size: 11px; line-height: 16px; color: #6d6f73; }
.word span { font-size: 15px; line-height: 24px; margin-top: 2px; color: #1a1d20; }
.switch { margin-top: 15px; padding-right: 10px; text-align: right; font: 12px/16px "Liberation Serif", serif; color: #333; }
.btn { border-radius: 27px; display: flex; align-items: center; justify-content: center; font-size: 16px; font-weight: 500; }
.btn-dark { height: 54px; margin-top: 19px; background: #0f1110; color: #fff; }
.btn-light { height: 53px; margin-top: 10px; margin-left: 1px; width: 286px; background: #fff; border: 1px solid #eeeeee; color: #14171a; }
.terms { margin: 97px 0 0; text-align: center; font-size: 13.750px; line-height: 20px; color: #8a8a8a; }
.terms b { font-weight: 500; color: #111; }

/* taskbar */
.taskbar { height: 40px; flex: none; background: #2d2d2d; border-top: 1px solid #383838; display: flex; align-items: stretch; color: #eee; }
.mint { width: 34px; height: 34px; margin: 2px 0 0 4px; flex: none; }
.bar-sep { width: 1px; height: 36px; margin: 2px 0 0 12px; background: #444; flex: none; }
.launch { display: flex; gap: 2px; margin-left: 8px; flex: none; }
.app { width: 38px; height: 39px; display: flex; align-items: flex-start; justify-content: center; padding-top: 4px; border-bottom: 3px solid transparent; flex: none; }
.app svg { width: 28px; height: 28px; display: block; }
.app-term span { width: 30px; height: 30px; background: #1f1f1f; border: 1px solid #111; border-radius: 6px; font: 700 11px/14px "DejaVu Sans Mono", monospace; color: #eee; padding: 1px 0 0 3px; }
.app-on { border-bottom-color: #2a9fd6; }
.app-chrome { background: #4a4a4a; }
.app-an { padding-top: 3px; }
.app-an svg { width: 32px; height: 32px; }
.tray { margin-left: auto; display: flex; align-items: center; }
.tray-i { width: 20px; height: 20px; flex: none; }
.tray-an { width: 24px; height: 24px; }
.m4 { margin-left: 4px; }
.m6 { margin-left: 6px; }
.m8 { margin-left: 8px; }
.m9 { margin-left: 9px; }
.flag { width: 27px; height: 18px; margin-left: 11px; flex: none; }
.clock { font: 700 12px "Noto Sans", sans-serif; color: #bcdcf6; margin-left: 8px; width: 42px; flex: none; }
.showdesk { width: 8px; height: 31px; background: #4a4a4a; margin-right: 4px; flex: none; }
```
